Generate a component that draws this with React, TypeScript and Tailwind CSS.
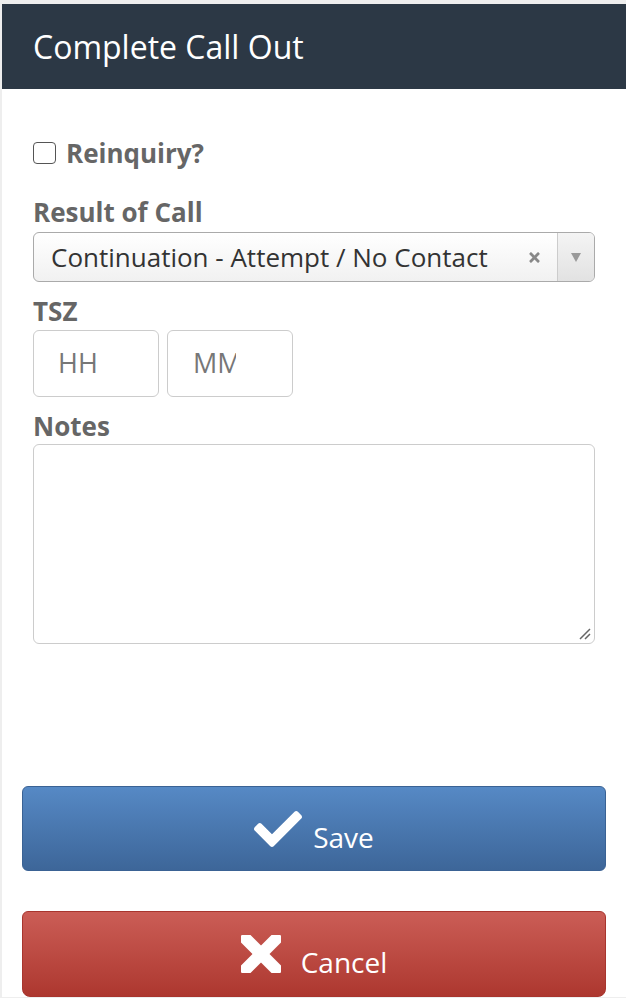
import { FaCheck, FaTimes } from "react-icons/fa";

const labelClass = "text-[26px] font-bold text-[#666666] leading-[34px]";

const CancelIcon = () => (
    <svg width="40" height="38" viewBox="0 0 40 38">
        <rect x="-7" y="13" width="54" height="12" rx="3" fill="white" transform="rotate(45 20 19)" />
        <rect x="-7" y="13" width="54" height="12" rx="3" fill="white" transform="rotate(-45 20 19)" />
    </svg>
);

const App = () => {
    return (
        <div className="min-h-[998px] bg-[#eeeeee] pl-[2px] pt-[4px] pb-[2px] font-['Open_Sans',_'Noto_Sans',sans-serif]">
            <div className="flex min-h-[992px] flex-col bg-white">
                <header className="flex h-[85px] items-center bg-[#2c3845] px-[31px]">
                    <h1 className="text-[32px] font-normal text-white">Complete Call Out</h1>
                </header>

                <section className="flex flex-col px-[31px] pt-[47px]">
                    <label className="flex items-center gap-[10px]">
                        <span className="h-[22px] w-[23px] rounded-[4px] border-[1.5px] border-[#555555] bg-white" />
                        <span className={labelClass}>Reinquiry?</span>
                    </label>

                    <div className={`${labelClass} mt-[25px]`}>Result of Call</div>
                    <div className="mt-[3px] flex h-[50px] items-stretch overflow-hidden rounded-[6px] border border-[#aaaaaa] bg-gradient-to-b from-white to-[#f1f1f1]">
                        <div className="flex flex-1 items-center whitespace-nowrap pl-[17px] text-[26px] text-[#333333]">
                            Continuation - Attempt / No Contact
                        </div>
                        <div className="flex w-[40px] items-center justify-center pr-[6px] text-[#888888]">
                            <FaTimes size={15} />
                        </div>
                        <div className="flex w-[37px] items-center justify-center border-l border-[#cccccc] bg-gradient-to-b from-[#f4f4f4] to-[#e2e2e2]">
                            <span className="h-0 w-0 border-x-[5px] border-t-[9px] border-x-transparent border-t-[#999999]" />
                        </div>
                    </div>

                    <div className={`${labelClass} mt-[12px]`}>TSZ</div>
                    <div className="mt-[2px] flex gap-[8px]">
                        <div className="flex h-[67px] w-[126px] items-center rounded-[6px] border border-[#cccccc] pl-[24px] text-[27px] text-[#777777]">
                            HH
                        </div>
                        <div className="flex h-[67px] w-[126px] items-center overflow-hidden rounded-[6px] border border-[#cccccc] pl-[25px] text-[27px] text-[#777777]">
                            <span className="w-[43px] overflow-hidden whitespace-nowrap">MM</span>
                        </div>
                    </div>

                    <div className={`${labelClass} mt-[12px]`}>Notes</div>
                    <div className="relative mt-[1px] h-[200px] rounded-[6px] border border-[#cccccc]">
                        <svg className="absolute bottom-[3px] right-[3px]" width="12" height="12" viewBox="0 0 12 12">
                            <path d="M1 11 L11 1 M6 11 L11 6" stroke="#666666" strokeWidth="1.5" />
                        </svg>
                    </div>
                </section>

                <footer className="mt-auto flex flex-col gap-[40px] px-[20px] pt-[142px]">
                    <button className="flex h-[85px] items-center justify-center gap-[11px] rounded-[6px] border border-[#3a6294] bg-gradient-to-b from-[#5689c5] to-[#3d6699] text-white">
                        <FaCheck size={48} />
                        <span className="pt-[16px] text-[28px]">Save</span>
                    </button>
                    <button className="flex h-[86px] items-center justify-center gap-[20px] rounded-t-[6px] rounded-b-[8px] border border-[#a8352e] bg-gradient-to-b from-[#cb5d56] to-[#ad372f] text-white">
                        <CancelIcon />
                        <span className="pt-[16px] text-[28px]">Cancel</span>
                    </button>
                </footer>
            </div>
        </div>
    );
};

export default App;
